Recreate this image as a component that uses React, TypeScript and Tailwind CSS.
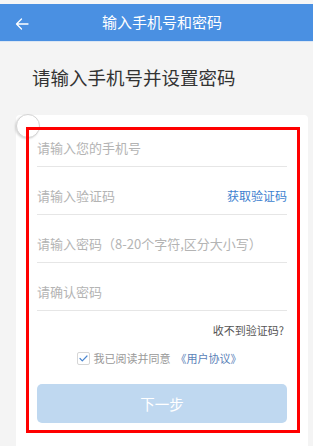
import React from 'react';

const font = { fontFamily: '"Noto Sans CJK SC", "Noto Sans", sans-serif' };

function Row({ placeholder, first, action }: { placeholder: string; first?: boolean; action?: string }) {
  return (
    <div
      className={`flex items-center justify-between border-b border-[#e6e6e6] ${
        first ? 'h-[37px]' : 'h-[48px] pt-[10px]'
      }`}
    >
      <span className="text-[13px] text-[#b4b4b4]">{placeholder}</span>
      {action && <span className="text-[12px] text-[#3d7fcf]">{action}</span>}
    </div>
  );
}

export default function App() {
  return (
    <div className="w-[313px] h-[446px] overflow-hidden bg-[#f4f4f4]" style={font}>
      {/* top strip */}
      <div className="h-[4px] bg-[#f6f6f6]" />

      {/* Header */}
      <div className="relative h-[38px] bg-[#4a90e2] flex items-center justify-center border-b border-[#dbe6f3]">
        <svg
          className="absolute left-[15px] top-[14px]"
          width="14"
          height="12"
          viewBox="0 0 14 12"
          fill="none"
          stroke="white"
          strokeWidth="1.3"
          strokeLinecap="round"
          strokeLinejoin="round"
        >
          <path d="M13 6H1.5M6.5 1L1.5 6l5 5" />
        </svg>
        <span className="pl-[11px] text-[15px] text-white">输入手机号和密码</span>
      </div>

      {/* Title */}
      <div className="h-[73px] flex items-center pl-[32px] pb-[1px]">
        <h1 className="text-[18.5px] text-[#333333]">请输入手机号并设置密码</h1>
      </div>

      {/* Card */}
      <div className="relative ml-[16px] w-[292px] rounded-[4px] bg-white pt-[12px] pb-[20px]">
        {/* corner marker */}
        <div className="absolute left-[0px] top-[-1px] w-[24px] h-[24px] rounded-full bg-white border border-[#d4d4d4] shadow-[-1px_1px_2px_rgba(0,0,0,0.15)]" />

        <div className="relative ml-[10px] mr-[8px] border-[3px] border-[#ff0000] pl-[8px] pr-[10px] pb-[7px]">
          <Row first placeholder="请输入您的手机号" />
          <Row placeholder="请输入验证码" action="获取验证码" />
          <Row placeholder="请输入密码（8-20个字符,区分大小写）" />
          <Row placeholder="请确认密码" />

          <div className="mt-[11px] flex justify-end pr-[3px]">
            <span className="text-[11px] leading-[16px] text-[#555555]">收不到验证码?</span>
          </div>

          <div className="mt-[12px] flex items-center justify-center pr-[6px]">
            <span className="mr-[4px] flex h-[13px] w-[13px] items-center justify-center rounded-[2px] border border-[#d6d6d6]">
              <svg width="9" height="7" viewBox="0 0 9 7" fill="none" stroke="#4a86d0" strokeWidth="1.2" strokeLinecap="round" strokeLinejoin="round">
                <path d="M1 3.5l2.3 2.3L8 1" />
              </svg>
            </span>
            <span className="text-[11px] leading-[16px] text-[#999999]">我已阅读并同意</span>
            <span className="ml-[5px] text-[11px] leading-[16px] text-[#5b7fb8]">《用户协议》</span>
          </div>

          <button className="mt-[18px] flex h-[39px] w-full items-center justify-center rounded-[5px] bg-[#bfd8f0] text-[14.5px] text-white">
            下一步
          </button>
        </div>
      </div>
    </div>
  );
}
